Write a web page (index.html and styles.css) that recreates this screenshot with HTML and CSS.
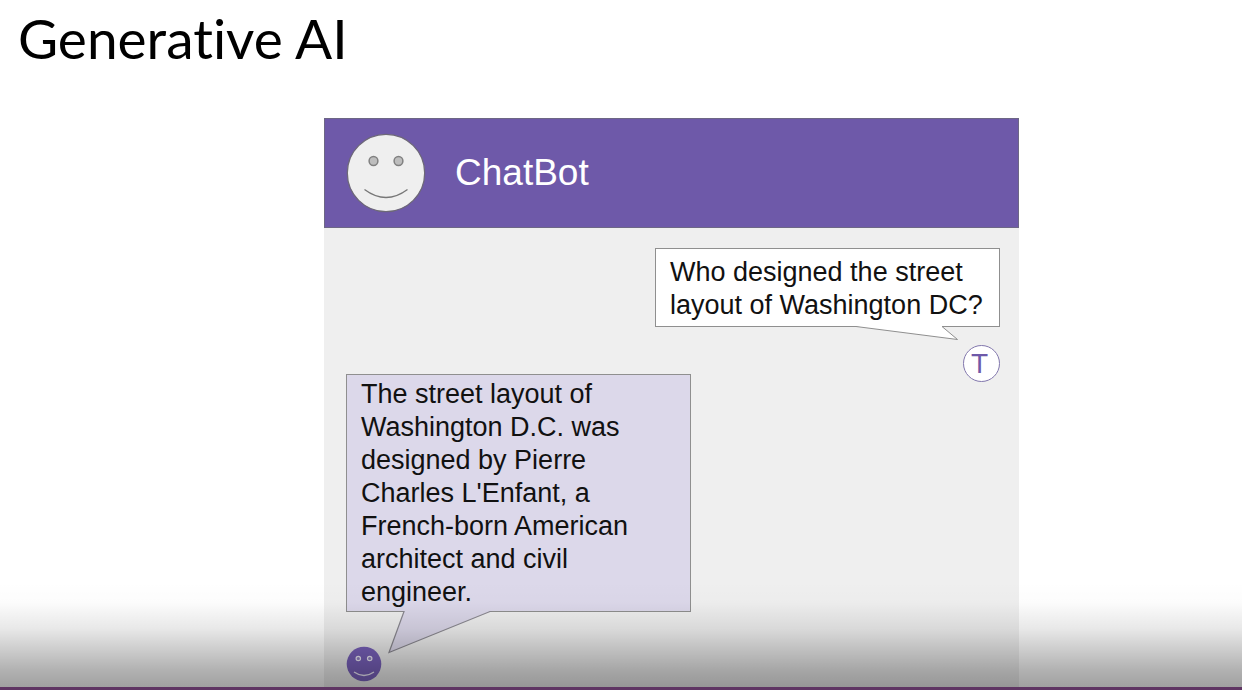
FILE: index.html
```html
<!DOCTYPE html>
<html lang="en">
<head>
<meta charset="utf-8">
<meta name="viewport" content="width=device-width, initial-scale=1">
<title>Generative AI</title>
<link rel="stylesheet" href="styles.css">
</head>
<body>
<main class="slide">
  <h1 class="slide-title">Generative AI</h1>
  <section class="chat" aria-label="ChatBot conversation">
    <header class="chat-header">
      <svg class="chat-logo" viewBox="0 0 80 80" aria-hidden="true">
        <circle cx="40" cy="40" r="38.7" fill="#efefef" stroke="#6d6878" stroke-width="1.3"/>
        <circle cx="27.5" cy="28" r="4.4" fill="#bdbdbd" stroke="#808080" stroke-width="1.5"/>
        <circle cx="52.5" cy="28" r="4.4" fill="#bdbdbd" stroke="#808080" stroke-width="1.5"/>
        <path d="M18.500 56.500Q40 72.500 61.500 56.500" fill="none" stroke="#777" stroke-width="1.3"/>
      </svg>
      <h2 class="chat-name">ChatBot</h2>
    </header>
    <div class="chat-body">
      <article class="message message-user">
        <div class="bubble bubble-user">
          <p class="bubble-text">Who designed the street layout of Washington DC?</p>
          <svg class="tail tail-user" viewBox="0 0 105 16" aria-hidden="true">
            <path d="M1 0L1 1.500L102.500 14.500L87 1.500L87 0Z" fill="#fff"/>
            <path d="M0 1.500H1L102.500 14.500L87 1.500H90" fill="none" stroke="#8f8f8f"/>
          </svg>
        </div>
        <span class="avatar-user">T</span>
      </article>
      <article class="message message-bot">
        <div class="bubble bubble-bot">
          <p class="bubble-text">The street layout of Washington D.C. was designed by Pierre Charles L'Enfant, a French-born American architect and civil engineer.</p>
          <svg class="tail tail-bot" viewBox="0 0 106 44" aria-hidden="true">
            <path d="M17 0V1.500L2 42.500L103 1.500V0Z" fill="#dcd8ea"/>
            <path d="M15 1.500H17L2 42.500L103 1.500H105" fill="none" stroke="#8b8991" stroke-width="1.2"/>
          </svg>
        </div>
        <svg class="avatar-bot" viewBox="0 0 36 36" aria-hidden="true">
          <circle cx="18" cy="18" r="17.300" fill="#7a62bd"/>
          <circle cx="12.300" cy="12.500" r="2.200" fill="#9484c8" stroke="#f4f0ff" stroke-width="1.200"/>
          <circle cx="23.700" cy="12.500" r="2.200" fill="#9484c8" stroke="#f4f0ff" stroke-width="1.200"/>
          <path d="M8 26Q18 33 28 26" fill="none" stroke="#f4f0ff" stroke-width="1.300"/>
        </svg>
      </article>
    </div>
  </section>
  <div class="shade"></div>
</main>
</body>
</html>
```
FILE: styles.css
```css
* {
  box-sizing: border-box;
}

body {
  margin: 0;
  background: #fff;
  color: #111;
  font-family: "Liberation Sans", Arial, sans-serif;
}

.slide {
  position: relative;
  display: grid;
  grid-template-columns: 324fr 695fr 223fr;
  grid-template-rows: auto 1fr;
  min-height: 100vh;
  border-bottom: 3px solid #5f3563;
}

.slide-title {
  grid-column: 1 / -1;
  margin: 0;
  padding: 5px 18px 47px;
  color: #000;
  font-family: Lato, sans-serif;
  font-size: 55px;
  font-weight: 400;
  font-variant-ligatures: none;
  line-height: 66px;
}

.chat {
  grid-column: 2;
  display: flex;
  flex-direction: column;
  background: #efefef;
}

.chat-header {
  display: flex;
  align-items: center;
  gap: 29px;
  min-height: 110px;
  padding: 0 21px;
  border: 1px solid #6d6785;
  background: #6e59a9;
}

.chat-logo {
  width: 80px;
  height: 80px;
}

.chat-name {
  margin: 0;
  color: #fff;
  font-size: 37px;
  font-weight: 400;
  line-height: 42px;
}

.chat-body {
  flex: 1;
  padding: 20px 19px 5px 22px;
}

.message {
  display: flex;
  flex-direction: column;
}

.message-user {
  align-items: flex-end;
  gap: 18px;
}

.message-bot {
  align-items: flex-start;
  gap: 34px;
  margin-top: -8px;
}

.bubble {
  position: relative;
  width: 100%;
  max-width: 345px;
  border: 1px solid #8f8f8f;
}

.bubble-user {
  padding: 7px 8px 4px 14px;
  background: #fff;
}

.bubble-bot {
  padding: 3px 14px 2px;
  background: #dcd8ea;
}

.bubble-text {
  margin: 0;
  font-size: 27px;
  line-height: 33px;
}

.tail {
  position: absolute;
  top: calc(100% - 1px);
}

.tail-user {
  right: 39px;
  width: 105px;
  height: 16px;
}

.tail-bot {
  left: 40px;
  width: 106px;
  height: 44px;
}

.avatar-user {
  display: flex;
  align-items: center;
  justify-content: center;
  width: 37px;
  height: 37px;
  padding-right: 4px;
  border: 1px solid #8277ad;
  border-radius: 50%;
  background: #fff;
  color: #6e59a9;
  font-size: 28px;
  line-height: 33px;
}

.avatar-bot {
  width: 36px;
  height: 36px;
}

.shade {
  position: absolute;
  inset: auto 0 0;
  height: 106px;
  background: linear-gradient(
    rgba(0, 0, 0, 0) 0%,
    rgba(0, 0, 0, 0.01) 20%,
    rgba(0, 0, 0, 0.09) 45%,
    rgba(0, 0, 0, 0.2) 65%,
    rgba(0, 0, 0, 0.31) 85%,
    rgba(0, 0, 0, 0.37) 100%
  );
  pointer-events: none;
}
```
